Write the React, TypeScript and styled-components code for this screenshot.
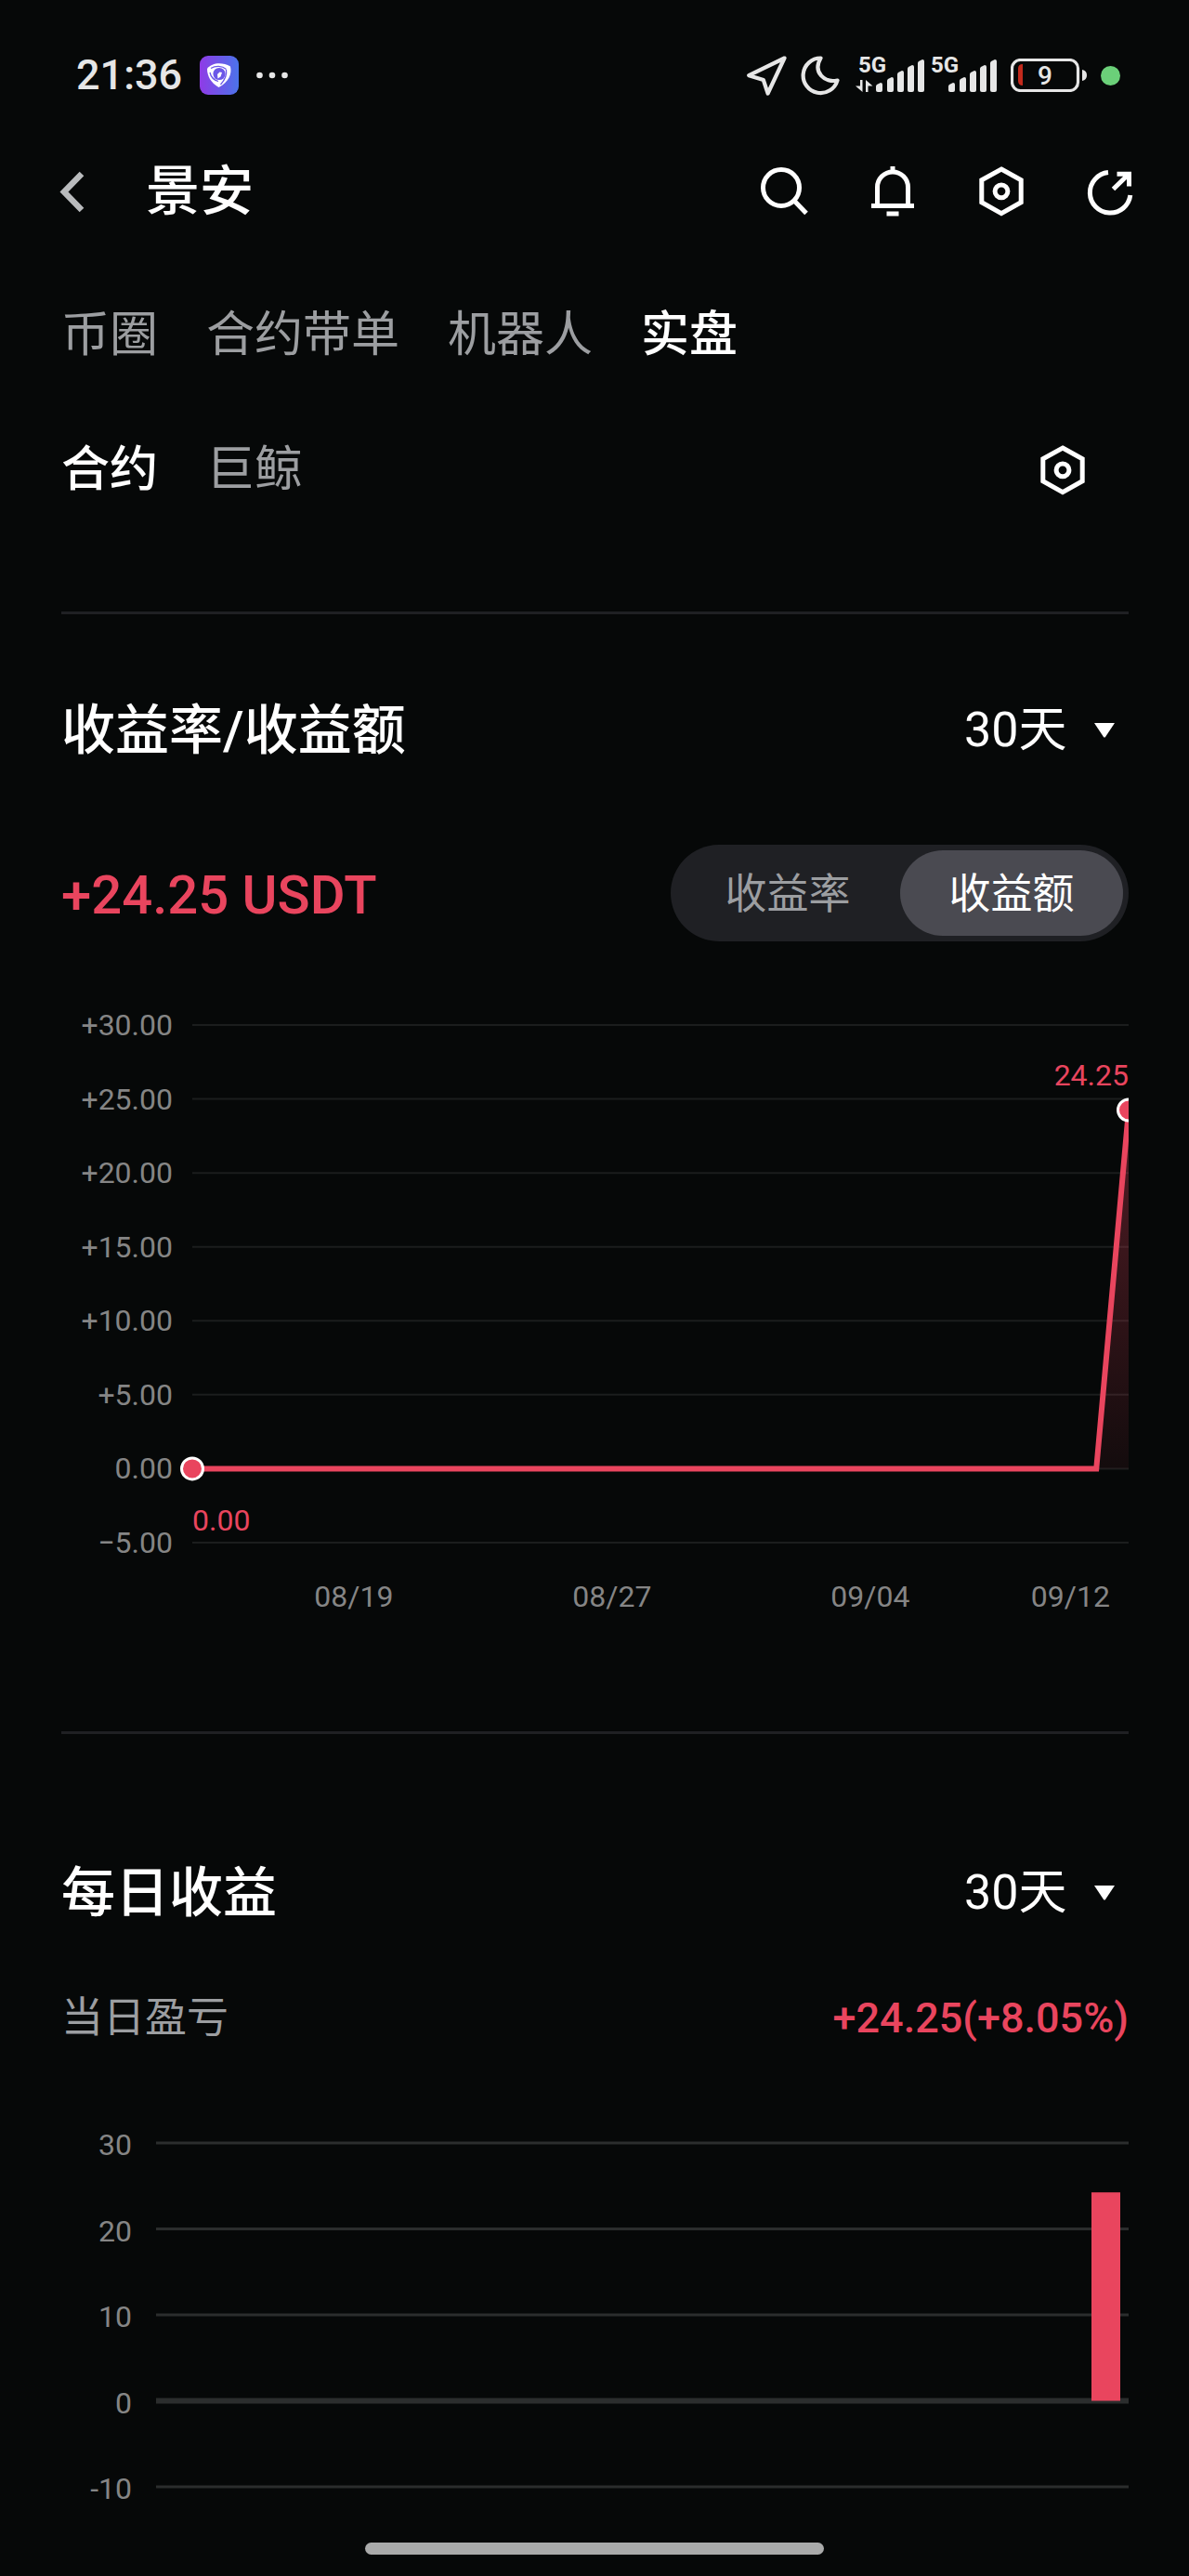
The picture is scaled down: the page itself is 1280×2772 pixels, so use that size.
import React, { useState } from "react";
import styled, { createGlobalStyle } from "styled-components";

const color = {
  page: "#060808",
  text: "#ffffff",
  status: "#e6e6e6",
  muted: "#9c9ea1",
  axis: "#858585",
  rule: "#1f2023",
  grid: "#1b1d1d",
  barGrid: "#2b2d2d",
  track: "#1f2024",
  thumb: "#4a4a51",
  accent: "#e9455e",
};

const fontStack = `Roboto, "Noto Sans CJK SC", sans-serif`;

const GlobalStyle = createGlobalStyle`
  *, *::before, *::after { box-sizing: border-box; }
  body {
    margin: 0;
    background: ${color.page};
    color: ${color.text};
    font-family: ${fontStack};
  }
  button, select { font: inherit; color: inherit; }
`;

const Page = styled.div`
  display: flex;
  flex-direction: column;
  min-height: 100vh;
  background: ${color.page};
`;

const StatusBar = styled.div`
  display: flex;
  align-items: center;
  justify-content: space-between;
  height: 162px;
  padding: 0 74px 0 82px;
  color: ${color.status};
`;

const StatusGroup = styled.div<{ $gap: number }>`
  display: flex;
  align-items: center;
  gap: ${(p) => p.$gap}px;
`;

const Clock = styled.time`
  font-size: 45px;
  font-weight: 500;
  line-height: 56px;
`;

const PrivacyDot = styled.span`
  width: 21px;
  height: 21px;
  border-radius: 50%;
  background: #6bd079;
`;

const Header = styled.header`
  display: flex;
  align-items: center;
  height: 88px;
  padding: 0 53px 0 48px;
`;

const IconButton = styled.button`
  display: flex;
  align-items: center;
  justify-content: center;
  width: 64px;
  height: 64px;
  padding: 0;
  border: 0;
  background: none;
  cursor: pointer;
`;

const Title = styled.h1`
  flex: 1;
  margin: 0 0 0 45px;
  font-size: 58px;
  font-weight: 500;
  line-height: 72px;
`;

const Actions = styled.div`
  display: flex;
  gap: 53px;
`;

const Body = styled.main`
  display: flex;
  flex-direction: column;
  padding: 0 65px 0 66px;
`;

const TabRow = styled.nav<{ $top: number }>`
  display: flex;
  align-items: center;
  gap: 52px;
  height: 104px;
  margin-top: ${(p) => p.$top}px;
`;

const Tab = styled.button<{ $active: boolean }>`
  padding: 0;
  border: 0;
  background: none;
  font-size: 52px;
  font-weight: ${(p) => (p.$active ? 500 : 400)};
  line-height: 72px;
  color: ${(p) => (p.$active ? color.text : color.muted)};
  cursor: pointer;
`;

const TabAction = styled.div`
  margin: 0 39px 0 auto;
`;

const Section = styled.section<{ $gap: number; $top: number }>`
  display: flex;
  flex-direction: column;
  margin-top: ${(p) => p.$gap}px;
  padding-top: ${(p) => p.$top}px;
  border-top: 3px solid ${color.rule};
`;

const Row = styled.div<{ $top?: number }>`
  display: flex;
  align-items: center;
  justify-content: space-between;
  margin-top: ${(p) => p.$top ?? 0}px;
`;

const SectionTitle = styled.h2`
  margin: 0;
  font-size: 58px;
  font-weight: 500;
  line-height: 72px;
`;

const PeriodWrap = styled.label`
  display: grid;
  align-items: center;
  justify-items: end;

  > * {
    grid-area: 1 / 1;
  }
`;

const PeriodSelect = styled.select`
  appearance: none;
  padding: 0 66px 0 0;
  border: 0;
  background: ${color.page};
  font-size: 52px;
  line-height: 72px;
  cursor: pointer;
`;

const Caret = styled.svg`
  margin-right: 15px;
  pointer-events: none;
`;

const Amount = styled.strong`
  padding-top: 4px;
  font-size: 58px;
  font-weight: 500;
  line-height: 72px;
  color: ${color.accent};
`;

const Segmented = styled.div`
  display: flex;
  gap: 1px;
  padding: 6px;
  border-radius: 52px;
  background: ${color.track};
`;

const Segment = styled.button<{ $active: boolean }>`
  width: 240px;
  height: 92px;
  padding: 4px 0 0;
  border: 0;
  border-radius: 46px;
  background: ${(p) => (p.$active ? color.thumb : "transparent")};
  font-size: 45px;
  line-height: 64px;
  color: ${(p) => (p.$active ? color.text : color.muted)};
  cursor: pointer;
`;

const Caption = styled.span`
  font-size: 45px;
  line-height: 64px;
  color: ${color.muted};
`;

const DailyAmount = styled.span`
  font-size: 45px;
  font-weight: 500;
  line-height: 64px;
  color: ${color.accent};
`;

const Chart = styled.svg<{ $top: number }>`
  display: block;
  width: 100%;
  height: auto;
  margin-top: ${(p) => p.$top}px;
  font-family: ${fontStack};
  font-size: 32px;
`;

const HomeIndicator = styled.div`
  align-self: center;
  width: 494px;
  max-width: 40%;
  height: 13px;
  margin: 32px 0 23px;
  border-radius: 7px;
  background: #a9aaaa;
`;

function AppLogo() {
  return (
    <svg width="42" height="42" viewBox="0 0 42 42" aria-hidden="true">
      <defs>
        <linearGradient id="logo" x1="0" y1="0" x2="1" y2="0">
          <stop offset="0" stopColor="#8f3be6" />
          <stop offset="1" stopColor="#4b73ea" />
        </linearGradient>
      </defs>
      <rect width="42" height="42" rx="9" fill="url(#logo)" />
      <path
        d="M8 14C13 7.500 24 6.500 33 11.500C35 20 31 28 20.500 34C12 29 8 22 8 14Z"
        fill="#fff"
      />
      <circle cx="21" cy="19.500" r="6.600" fill="#6b57e8" />
      <path
        d="M12 13.500C17 10.500 24 10.500 28.500 14.500M28.500 15C29.500 21 27 26 22.500 31M11 18C12 23 15 26 20 27.500"
        fill="none"
        stroke="#6b57e8"
        strokeWidth="1.300"
      />
      <path d="M21.500 17.500L24 18L22.500 22.500L19.500 24.500L19 20Z" fill="#fff" />
    </svg>
  );
}

function MoreDots() {
  return (
    <svg width="34" height="8" viewBox="0 0 34 8" fill={color.status} aria-hidden="true">
      <circle cx="3.500" cy="4" r="3.300" />
      <circle cx="17" cy="4" r="3.300" />
      <circle cx="30.500" cy="4" r="3.300" />
    </svg>
  );
}

function LocationIcon() {
  return (
    <svg width="44" height="46" viewBox="0 0 44 46" aria-hidden="true">
      <path
        d="M41.500 4.500L3.200 23.200L18.800 28L23.600 42.500Z"
        fill="none"
        stroke={color.status}
        strokeWidth="4.200"
        strokeLinejoin="round"
      />
    </svg>
  );
}

function MoonIcon() {
  return (
    <svg width="44" height="44" viewBox="0 0 44 44" aria-hidden="true">
      <path
        d="M21.500 3.500A18.800 18.800 0 1 0 39.500 27.500C26 30.500 12.500 19 21.500 3.500Z"
        fill="none"
        stroke={color.status}
        strokeWidth="4.200"
        strokeLinejoin="round"
      />
    </svg>
  );
}

const signalBars = [
  { x: 22, top: 32 },
  { x: 34, top: 26 },
  { x: 45, top: 19 },
  { x: 56, top: 13 },
  { x: 67, top: 7 },
];

function Signal({ data }: { data?: boolean }) {
  const inset = data ? 0 : 3;
  return (
    <svg
      width={74 - inset}
      height="60"
      viewBox={`${inset} -8 ${74 - inset} 60`}
      fill={color.status}
      aria-hidden="true"
    >
      <text x="3" y="19" fontSize="24" fontWeight="700" fontFamily="Roboto, sans-serif">
        5G
      </text>
      {data && (
        <path d="M5 27H7.500V40L0 33.500H5ZM11 40V27L18.500 33.500H13.500V40Z" />
      )}
      {signalBars.map(({ x, top }) => (
        <path
          key={x}
          d={`M${x} ${top + 2}Q${x} ${top + 1} ${x + 1} ${top}L${x + 5} ${top - 2}Q${x + 7} ${top - 2} ${x + 7} ${top}V38Q${x + 7} 40 ${x + 5} 40H${x + 2}Q${x} 40 ${x} 38Z`}
        />
      ))}
    </svg>
  );
}

function Battery() {
  return (
    <svg width="82" height="36" viewBox="0 0 82 36" aria-hidden="true">
      <rect x="1.500" y="1.500" width="71" height="33" rx="9" fill="none" stroke={color.status} strokeWidth="3.200" />
      <path d="M77 12Q82 13 82 18T77 24Z" fill={color.status} />
      <path d="M13 6V29Q8 29 8 24V11Q8 6 13 6Z" fill="#c32a1c" />
      <text
        x="37"
        y="28"
        textAnchor="middle"
        fontSize="28"
        fontWeight="500"
        fontFamily="Roboto, sans-serif"
        fill={color.status}
      >
        9
      </text>
    </svg>
  );
}

const LineIcon = styled.svg<{ $stroke?: string }>`
  display: block;
  width: 56px;
  height: 56px;
  fill: none;
  stroke: ${(p) => p.$stroke ?? color.text};
  stroke-width: 5;
`;

function BackIcon() {
  return (
    <LineIcon viewBox="0 0 56 56" $stroke="#b9bbbd">
      <path d="M36 9L17 28.500L36 48" strokeWidth="6.500" />
    </LineIcon>
  );
}

function SearchIcon() {
  return (
    <LineIcon viewBox="0 0 56 56">
      <circle cx="25" cy="24" r="19.500" />
      <path d="M39 38L52 51.500" />
    </LineIcon>
  );
}

function BellIcon() {
  return (
    <LineIcon viewBox="0 0 56 56">
      <path d="M28 1V7M11.500 43V23.500A16.500 16.500 0 0 1 44.500 23.500V43M5 43.500H51M21.500 52H34.500" />
    </LineIcon>
  );
}

function HexIcon() {
  return (
    <LineIcon viewBox="0 0 56 56">
      <path d="M28 4L49.200 15.800V39.800L28 51.600L6.800 39.800V15.800Z" />
      <circle cx="28" cy="27.800" r="6.900" />
    </LineIcon>
  );
}

function ShareIcon() {
  return (
    <LineIcon viewBox="0 0 56 56">
      <path d="M26 7.600A21.800 21.800 0 1 0 49.800 32" />
      <path d="M35.500 9.300H48.500V22.500M31.500 25.500L48 9.500" />
    </LineIcon>
  );
}

function PeriodPicker({ label }: { label: string }) {
  return (
    <PeriodWrap>
      <PeriodSelect aria-label={label} defaultValue="30">
        <option value="30">30天</option>
        <option value="90">90天</option>
      </PeriodSelect>
      <Caret width="22" height="16" viewBox="0 0 22 16" aria-hidden="true">
        <path d="M0 0H22L12 15Q11 16 10 15Z" fill={color.text} />
      </Caret>
    </PeriodWrap>
  );
}

const DAYS = 30;
const profit: number[] = Array.from({ length: DAYS }, (_, day) => (day === DAYS - 1 ? 24.25 : 0));

function signed(value: number) {
  if (value === 0) return "0.00";
  return `${value > 0 ? "+" : "−"}${Math.abs(value).toFixed(2)}`;
}

function ProfitChart() {
  const left = 141;
  const right = 1149;
  const x = (day: number) => left + ((right - left) * day) / (DAYS - 1);
  const y = (value: number) => 24 + ((30 - value) * 557) / 35;
  const ticks = [30, 25, 20, 15, 10, 5, 0, -5];
  const dates = [
    { day: 5, text: "08/19" },
    { day: 13, text: "08/27" },
    { day: 21, text: "09/04" },
  ];
  const points = profit.map((value, day) => `${x(day)},${y(value)}`).join(" ");
  const last = DAYS - 1;

  return (
    <Chart $top={66} viewBox="0 0 1149 660" role="img" aria-label="收益额走势">
      <defs>
        <linearGradient id="area" x1="0" y1="0" x2="0" y2="1">
          <stop offset="0" stopColor={color.accent} stopOpacity="0.34" />
          <stop offset="1" stopColor={color.accent} stopOpacity="0.06" />
        </linearGradient>
      </defs>
      {ticks.map((tick) => (
        <g key={tick}>
          <line x1={left} x2={right} y1={y(tick)} y2={y(tick)} stroke={color.grid} strokeWidth="2" />
          <text x="120" y={y(tick) + 11} textAnchor="end" fill={color.axis}>
            {signed(tick)}
          </text>
        </g>
      ))}
      <polygon points={`${x(0)},${y(0)} ${points} ${x(last)},${y(0)}`} fill="url(#area)" />
      <polyline points={points} fill="none" stroke={color.accent} strokeWidth="6" />
      <g fill={color.accent} stroke={color.text} strokeWidth="3">
        <circle cx={x(0)} cy={y(0)} r="11.500" />
        <circle cx={x(last)} cy={y(profit[last])} r="11.500" />
      </g>
      <g fill={color.accent}>
        <text x={left} y="568">0.00</text>
        <text x={right} y="89" textAnchor="end">24.25</text>
      </g>
      <g fill={color.axis}>
        {dates.map(({ day, text }) => (
          <text key={text} x={x(day)} y="650" textAnchor="middle">
            {text}
          </text>
        ))}
        <text x="1129" y="650" textAnchor="end">09/12</text>
      </g>
    </Chart>
  );
}

function DailyChart() {
  const left = 102;
  const right = 1149;
  const y = (value: number) => 26 + ((30 - value) * 370) / 40;
  const ticks = [30, 20, 10, 0, -10];
  return (
    <Chart $top={76} viewBox="0 0 1149 424" role="img" aria-label="每日收益">
      {ticks.map((tick) => (
        <g key={tick}>
          <line
            x1={left}
            x2={right}
            y1={y(tick)}
            y2={y(tick)}
            stroke={color.barGrid}
            strokeWidth={tick === 0 ? 6 : 3}
          />
          <text x="76" y={y(tick) + 13} textAnchor="end" fill={color.axis}>
            {tick}
          </text>
        </g>
      ))}
      <rect x="1109" y={y(24.25)} width="31" height={y(0) - y(24.25)} fill={color.accent} />
    </Chart>
  );
}

const mainTabs = ["币圈", "合约带单", "机器人", "实盘"];
const subTabs = ["合约", "巨鲸"];
const measures = ["收益率", "收益额"];

export default function App() {
  const [mainTab, setMainTab] = useState("实盘");
  const [subTab, setSubTab] = useState("合约");
  const [measure, setMeasure] = useState("收益额");

  return (
    <Page>
      <GlobalStyle />
      <StatusBar>
        <StatusGroup $gap={19}>
          <Clock>21:36</Clock>
          <AppLogo />
          <MoreDots />
        </StatusGroup>
        <StatusGroup $gap={15}>
          <LocationIcon />
          <MoonIcon />
          <StatusGroup $gap={7}>
            <Signal data />
            <Signal />
          </StatusGroup>
          <Battery />
          <PrivacyDot />
        </StatusGroup>
      </StatusBar>

      <Header>
        <IconButton aria-label="返回">
          <BackIcon />
        </IconButton>
        <Title>景安</Title>
        <Actions>
          <IconButton aria-label="搜索">
            <SearchIcon />
          </IconButton>
          <IconButton aria-label="通知">
            <BellIcon />
          </IconButton>
          <IconButton aria-label="设置">
            <HexIcon />
          </IconButton>
          <IconButton aria-label="分享">
            <ShareIcon />
          </IconButton>
        </Actions>
      </Header>

      <Body>
        <TabRow $top={59} aria-label="主分类">
          {mainTabs.map((name) => (
            <Tab key={name} $active={name === mainTab} onClick={() => setMainTab(name)}>
              {name}
            </Tab>
          ))}
        </TabRow>
        <TabRow $top={41} aria-label="子分类">
          {subTabs.map((name) => (
            <Tab key={name} $active={name === subTab} onClick={() => setSubTab(name)}>
              {name}
            </Tab>
          ))}
          <TabAction>
            <IconButton aria-label="筛选设置">
              <HexIcon />
            </IconButton>
          </TabAction>
        </TabRow>

        <Section $gap={100} $top={89}>
          <Row>
            <SectionTitle>收益率/收益额</SectionTitle>
            <PeriodPicker label="收益周期" />
          </Row>
          <Row $top={87}>
            <Amount>+24.25 USDT</Amount>
            <Segmented>
              {measures.map((name) => (
                <Segment
                  key={name}
                  $active={name === measure}
                  aria-pressed={name === measure}
                  onClick={() => setMeasure(name)}
                >
                  {name}
                </Segment>
              ))}
            </Segmented>
          </Row>
          <ProfitChart />
        </Section>

        <Section $gap={124} $top={135}>
          <Row>
            <SectionTitle>每日收益</SectionTitle>
            <PeriodPicker label="每日收益周期" />
          </Row>
          <Row $top={67}>
            <Caption>当日盈亏</Caption>
            <DailyAmount>+24.25(+8.05%)</DailyAmount>
          </Row>
          <DailyChart />
        </Section>
      </Body>

      <HomeIndicator />
    </Page>
  );
}
